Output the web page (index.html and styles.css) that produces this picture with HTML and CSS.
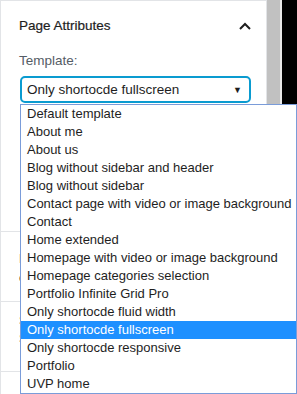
FILE: index.html
```html
<!DOCTYPE html>
<html lang="en">
<head>
    <meta charset="UTF-8">
    <title>Page Attributes</title>
    <link rel="stylesheet" href="styles.css">
</head>
<body>
    <div class="panel">
        <div class="section first">
            <div class="head">
                <h2>Page Attributes</h2>
                <svg class="chev" width="12" height="8" viewBox="0 0 12 8"><path d="M1 7 L6 2 L11 7" fill="none" stroke="#1e1e1e" stroke-width="2"/></svg>
            </div>
            <label class="lbl">Template:</label>
            <div class="select">
                <span>Only shortocde fullscreen</span>
                <span class="arrow">&#9660;</span>
            </div>
        </div>
        <div class="section filler disc">
            <p>Discussion</p>
            <p>comments</p>
        </div>
        <div class="section filler">
            <p>Sidebar</p>
            <p>Select</p>
        </div>
        <div class="section filler last"></div>
    </div>
    <div class="scroll"></div>
    <div class="gap"></div>
    <div class="dark"></div>

    <ul class="listbox">
        <li>Default template</li>
        <li>About me</li>
        <li>About us</li>
        <li>Blog without sidebar and header</li>
        <li>Blog without sidebar</li>
        <li>Contact page with video or image background</li>
        <li>Contact</li>
        <li>Home extended</li>
        <li>Homepage with video or image background</li>
        <li>Homepage categories selection</li>
        <li>Portfolio Infinite Grid Pro</li>
        <li>Only shortocde fluid width</li>
        <li class="sel">Only shortocde fullscreen</li>
        <li>Only shortocde responsive</li>
        <li>Portfolio</li>
        <li>UVP home</li>
    </ul>
</body>
</html>
```

FILE: styles.css
```css
body{
    margin: 0;
    height: 394px;
    display: flex;
    font-family: "Liberation Sans", Arial, sans-serif;
    font-size: 13px;
    color: #1e1e1e;
    overflow: hidden;
    background-color: #fff;
}
.panel{
    width: 265px;
    border-top: 1px solid #e2e4e7;
    border-left: 1px solid #e2e4e7;
    border-right: 1px solid #e2e4e7;
    background-color: #fff;
}
.section{
    padding: 0 15px 0 18px;
    border-bottom: 1px solid #e2e4e7;
}
.section.first{
    height: 230px;
}
.head{
    height: 49px;
    display: flex;
    align-items: center;
    justify-content: space-between;
}
.head h2{
    margin: 0;
    font-size: 13.5px;
    font-weight: normal;
    color: #1e1e1e;
    -webkit-text-stroke: 0.2px #1e1e1e;
}
.lbl{
    display: block;
    color: #555d66;
    font-size: 13.5px;
    line-height: 22px;
}
.select{
    margin: 4px 0 0 1px;
    height: 23px;
    border: 2px solid #0a9bd0;
    border-radius: 5px;
    display: flex;
    align-items: center;
    justify-content: space-between;
    padding: 0 7px 0 5px;
    font-size: 13.5px;
}
.arrow{
    font-size: 9px;
}
.filler{
    height: 69px;
}
.filler.last{
    height: 21px;
    border-bottom: 0;
}
.filler p{
    margin: 0;
    line-height: 18px;
    padding-top: 10px;
}
.filler p + p{
    padding-top: 0;
}
.filler.disc p{
    padding-top: 17px;
    line-height: 19px;
}
.filler.disc p + p{
    padding-top: 0;
}
.scroll{
    width: 13px;
    background-color: #c1c1c1;
}
.gap{
    width: 2px;
    background-color: #e8e8e8;
}
.dark{
    flex: 1;
    background-color: #000;
}
.listbox{
    position: absolute;
    left: 20px;
    top: 104px;
    width: 275px;
    margin: 0;
    padding: 0;
    list-style: none;
    background-color: #fff;
    border: 1px solid #7a9cd9;
    font-size: 13px;
}
.listbox li{
    height: 18px;
    line-height: 18px;
    padding-left: 6px;
    white-space: nowrap;
}
.listbox li.sel{
    background-color: #1e90ff;
    color: #fff;
}
```
